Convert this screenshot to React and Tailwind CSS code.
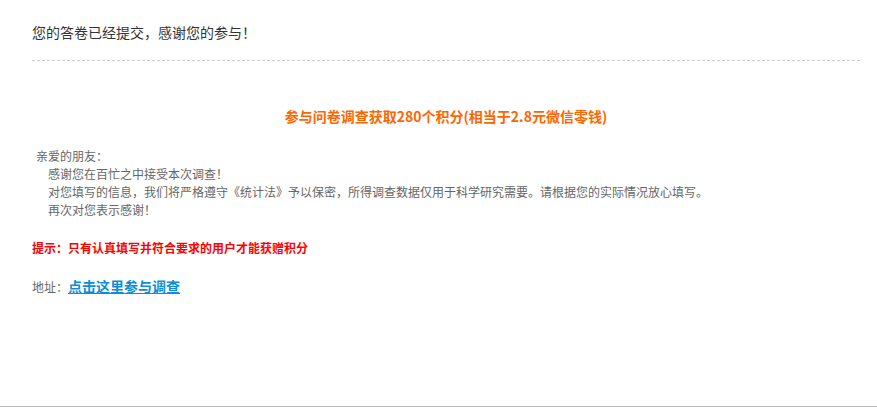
export default function App() {
  return (
    <div
      className="bg-white"
      style={{ fontFamily: '"Microsoft YaHei", "Noto Sans CJK SC", "Liberation Sans", sans-serif' }}
    >
      <div className="h-[407px] border-b border-[#bbb]">
        <div className="pl-8 pr-[17px] pt-[22px]">
          {/* ================= HEADER ================= */}
          <h1 className="text-[14px] leading-[20px] text-[#333] pb-[18px] border-b border-dashed border-[#ccc]">
            您的答卷已经提交，感谢您的参与！
          </h1>

          {/* ================= REWARD ================= */}
          <p className="mt-[45px] text-center text-[14px] leading-[20px] font-bold text-[#ff6600]">
            参与问卷调查获取280个积分(相当于2.8元微信零钱)
          </p>

          {/* ================= LETTER ================= */}
          <div className="mt-[21px] pl-[4px] text-[12px] leading-[18px] text-[#666]">
            <p>亲爱的朋友：</p>
            <p className="pl-[12px]">感谢您在百忙之中接受本次调查！</p>
            <p className="pl-[12px]">
              对您填写的信息，我们将严格遵守《统计法》予以保密，所得调查数据仅用于科学研究需要。请根据您的实际情况放心填写。
            </p>
            <p className="pl-[12px]">再次对您表示感谢！</p>
          </div>

          <p className="mt-[20px] text-[12px] leading-[18px] font-bold text-[#ff0000]">
            提示：只有认真填写并符合要求的用户才能获赠积分
          </p>

          <p className="mt-[19px] text-[12px] leading-[20px] text-[#666]">
            地址：
            <a href="#" className="text-[14px] font-bold text-[#0a8ed9] underline">
              点击这里参与调查
            </a>
          </p>
        </div>
      </div>
    </div>
  );
}
